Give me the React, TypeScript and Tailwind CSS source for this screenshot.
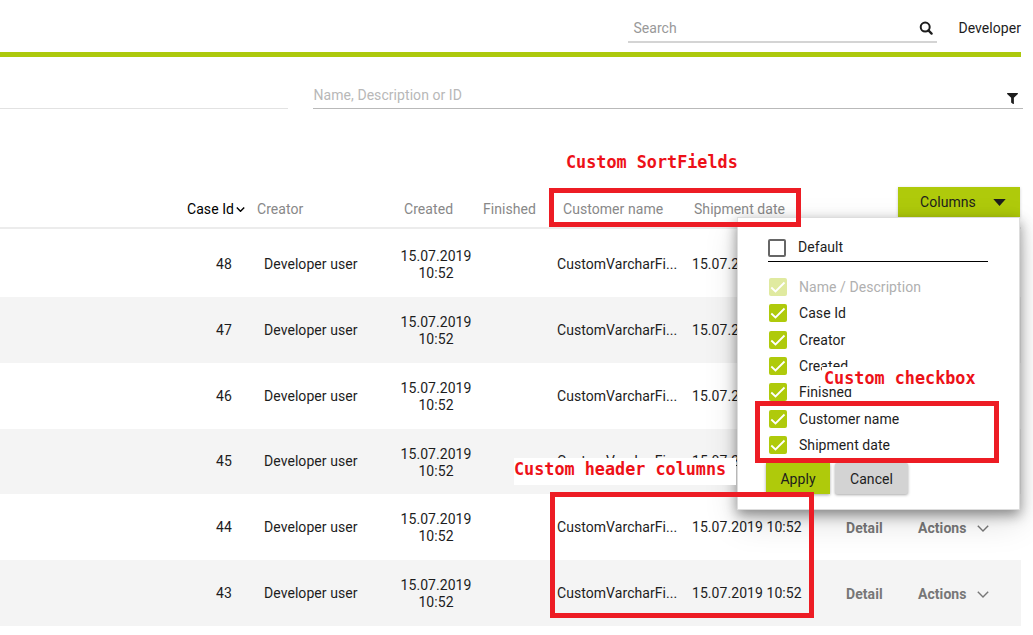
import { FaFilter } from "react-icons/fa";

const GRID =
  "grid grid-cols-[187px_70px_130px_95px_74px_135px_149px_78px_103px] w-[1021px]";

const cases = [
  { id: 48, height: "h-[68px] pt-[2px]" },
  { id: 47, height: "h-[66px] bg-[#f4f4f4]" },
  { id: 46, height: "h-[66px]" },
  { id: 45, height: "h-[65px] bg-[#f4f4f4]" },
  { id: 44, height: "h-[66px]" },
  { id: 43, height: "h-[66px] bg-[#f4f4f4]" },
];

const columnOptions = [
  { label: "Name / Description", disabled: true },
  { label: "Case Id" },
  { label: "Creator" },
  { label: "Created" },
  { label: "Finished" },
  { label: "Customer name" },
  { label: "Shipment date" },
];

function Chevron({ className }: { className: string }) {
  return (
    <svg viewBox="0 0 12 7" className={className} fill="none" stroke="currentColor">
      <path d="M0.8 0.8 L6 6 L11.2 0.8" />
    </svg>
  );
}

function SearchIcon() {
  return (
    <svg viewBox="0 0 14 14" className="size-[14px]" fill="none" stroke="currentColor">
      <circle cx="6.2" cy="6.1" r="4.5" strokeWidth="2" />
      <path d="M9.4 9.4 L12.6 12.6" strokeWidth="2.3" strokeLinecap="round" />
    </svg>
  );
}

function Header() {
  return (
    <header className="flex h-[57px] w-[1021px] items-start justify-end border-b-[5px] border-[#adc90c]">
      <div className="mt-[14px] flex h-[29px] w-[309px] items-center justify-between border-b-2 border-[#d4d4d4] pl-[5px] pr-[4px]">
        <span className="pt-[2px] text-[#999]">Search</span>
        <SearchIcon />
      </div>
      <span className="ml-[21px] mt-[18px] leading-5">Developer</span>
    </header>
  );
}

function Filters() {
  return (
    <div className="flex h-[52px] w-[1023px] items-stretch gap-[25px]">
      <div className="w-[288px] border-b border-[#e2e2e2]" />
      <div className="flex flex-1 items-end justify-between border-b border-[#b9b9b9] pr-[5px]">
        <span className="pb-[3px] pl-[0.5px] leading-5 text-[#b8b8b8]">Name, Description or ID</span>
        <FaFilter className="mb-[4px] size-[11px]" />
      </div>
    </div>
  );
}

function Checkbox({ disabled }: { disabled?: boolean }) {
  return (
    <span
      className={`flex size-[18px] items-center justify-center rounded-[2px] ${
        disabled ? "bg-[#e0eaa0]" : "bg-[#afca0b]"
      }`}
    >
      <svg viewBox="0 0 18 18" className="size-[18px]" fill="none" stroke="#fff" strokeWidth="1.8">
        <path d="M2.3 9.5 L6.5 13.5 L15.5 4.5" />
      </svg>
    </span>
  );
}

function ColumnsMenu() {
  return (
    <div className="relative h-[30px] w-[122px]">
      <button className="flex h-[30px] w-[122px] items-center justify-between bg-[#afca0b] pl-[22px] pr-[14px] shadow-[0_1px_3px_rgba(0,0,0,0.2)]">
        <span className="pt-px">Columns</span>
        <svg viewBox="0 0 13 7" className="h-[7px] w-[13px]">
          <path d="M0.3 0 H12.7 L6.5 7 Z" fill="currentColor" />
        </svg>
      </button>
      <div className="absolute right-0 top-[30px] z-10 h-[293px] w-[283px] border border-[#ddd] bg-white pl-[30px] shadow-[0_5px_12px_rgba(0,0,0,0.42),0_12px_32px_rgba(0,0,0,0.13)]">
        <div className="flex h-[44px] w-[220px] items-end border-b border-black pb-[4px]">
          <span className="size-[18px] rounded-[2px] border-2 border-[#666]" />
          <span className="ml-[12px] leading-[19px]">Default</span>
        </div>
        <ul className="mt-[12px] pl-px">
          {columnOptions.map(({ label, disabled }) => (
            <li
              key={label}
              className={`flex h-[26.3px] items-center gap-[12px] ${disabled ? "text-[#b0b0b0]" : ""}`}
            >
              <Checkbox disabled={disabled} />
              <span className="pt-px">{label}</span>
            </li>
          ))}
        </ul>
        <div className="-ml-[2px] mt-[5px] flex gap-[5px]">
          <button className="h-[31px] w-[64px] bg-[#afca0b] pt-px shadow-[0_1px_3px_rgba(0,0,0,0.35)]">
            Apply
          </button>
          <button className="h-[31px] w-[73px] rounded-[2px] bg-[#d3d3d3] pt-px shadow-[0_1px_3px_rgba(0,0,0,0.35)]">
            Cancel
          </button>
        </div>
      </div>
    </div>
  );
}

function CaseTable() {
  return (
    <section>
      <div className="mt-[78px] flex h-[42px] w-[1021px] items-start border-b-2 border-[#ececec]">
        <div className="grid flex-1 grid-cols-[187px_70px_147px_79px_80px_131px_1fr] pt-[12px] leading-5 text-[#888]">
          <span />
          <span className="flex items-center text-black">
            Case Id
            <Chevron className="ml-[2px] h-[5px] w-[9px] stroke-[2]" />
          </span>
          <span>Creator</span>
          <span>Created</span>
          <span>Finished</span>
          <span>Customer name</span>
          <span>Shipment date</span>
        </div>
        <div className="mr-px">
          <ColumnsMenu />
        </div>
      </div>
      {cases.map(({ id, height }) => (
        <div key={id} className={`${GRID} items-center ${height}`}>
          <span />
          <span className="pl-[29px]">{id}</span>
          <span className="pl-[7px]">Developer user</span>
          <span className="pl-[3px] pt-[2px] text-center leading-[17px]">
            15.07.2019
            <br />
            10:52
          </span>
          <span />
          <span className="pl-px">CustomVarcharFi...</span>
          <span className="whitespace-nowrap pl-px">15.07.2019 10:52</span>
          <span className="pl-[6px] pt-[2px] font-bold text-[#777]">Detail</span>
          <span className="flex items-center pt-[2px] font-bold text-[#777]">
            Actions
            <Chevron className="ml-[10px] h-[7px] w-[12px] stroke-[1.4]" />
          </span>
        </div>
      ))}
    </section>
  );
}

function Annotations() {
  const text =
    "absolute z-20 whitespace-pre font-['DejaVu_Sans_Mono',monospace] text-[16.8px] font-bold leading-[22px] tracking-normal text-[#ed1118]";
  const frame = "absolute z-20 border-[5px] border-[#ed1c24]";
  return (
    <div>
      <span className={`${text} left-[566px] top-[151px]`}>Custom SortFields</span>
      <span className={`${frame} left-[549px] top-[188px] h-[39px] w-[252px]`} />
      <span className={`${text} left-[822px] top-[367px] h-[22px] w-[160px] bg-white pl-[2px]`}>
        Custom checkbox
      </span>
      <span className={`${frame} left-[755px] top-[401px] h-[62px] w-[244px]`} />
      <span className={`${text} left-[514px] top-[458px] h-[27px] w-[222px] bg-white`}>
        Custom header columns
      </span>
      <span className={`${frame} left-[550px] top-[492px] h-[126px] w-[264px]`} />
    </div>
  );
}

export default function App() {
  return (
    <main className="relative h-[635px] w-[1033px] overflow-hidden bg-white font-['Roboto',sans-serif] text-[14px] tracking-[0.06px] text-[#1d1d1d]">
      <Header />
      <Filters />
      <CaseTable />
      <Annotations />
    </main>
  );
}
